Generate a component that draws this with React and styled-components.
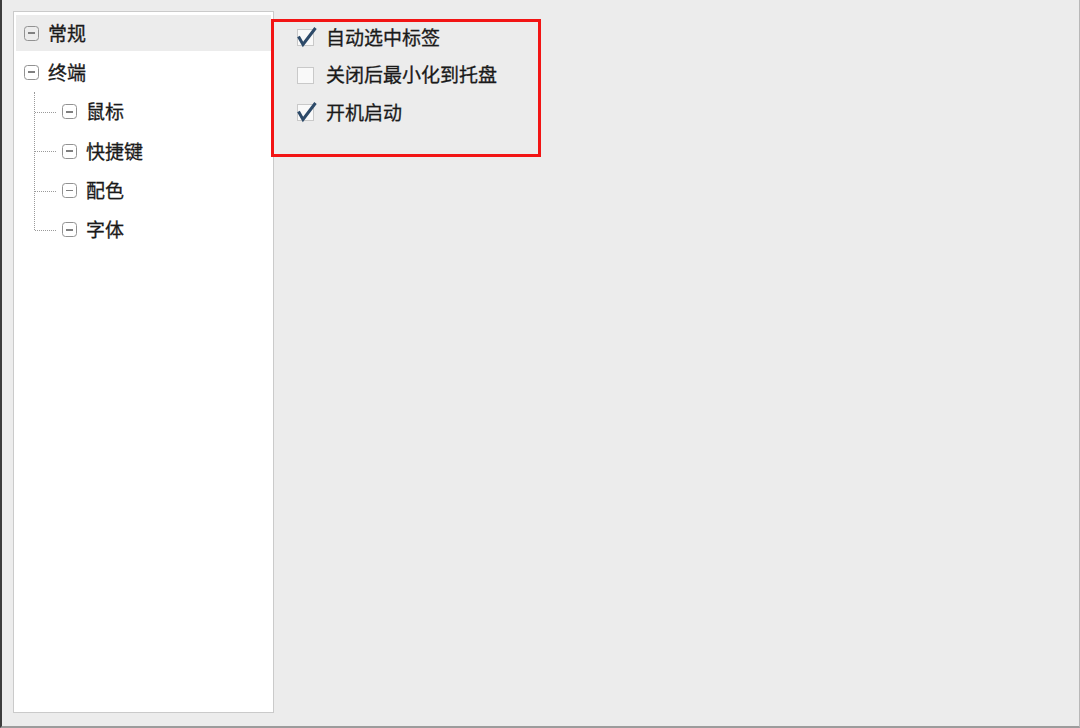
import styled, { createGlobalStyle } from 'styled-components';

const GlobalStyle = createGlobalStyle`
  html, body {
    margin: 0;
    padding: 0;
    background: #ececec;
  }
  body {
    font-family: "Noto Sans CJK SC", "Noto Sans", sans-serif;
    color: #1a1a1a;
  }
`;

const Window = styled.div`
  box-sizing: border-box;
  width: 1080px;
  height: 728px;
  background: #ececec;
  border-left: 2px solid #3d3d3d;
  border-right: 1px solid #b8b8b8;
  border-bottom: 2px solid #9c9c9c;
  display: flex;
  align-items: flex-start;
  padding: 11px 0 0 11px;
`;

const Tree = styled.div`
  box-sizing: border-box;
  width: 261px;
  height: 702px;
  background: #fff;
  border: 1px solid #cacaca;
  padding: 3px 2px;
  display: flex;
  flex-direction: column;
  gap: 3.4px;
`;

const Branch = styled.div`
  position: relative;
  display: flex;
  flex-direction: column;
  gap: 3.4px;

  &::before {
    content: '';
    position: absolute;
    left: 18px;
    top: -2px;
    bottom: 18px;
    border-left: 1px dotted #9a9a9a;
  }
`;

const Node = styled.div`
  position: relative;
  height: 36px;
  display: flex;
  align-items: center;
  padding-left: ${(p) => (p.$child ? 46 : 8)}px;
  background: ${(p) => (p.$selected ? '#ececec' : 'transparent')};
  font-size: 19px;
  line-height: 1;
  -webkit-text-stroke: 0.3px #1a1a1a;

  ${(p) =>
    p.$child &&
    `
    &::before {
      content: '';
      position: absolute;
      left: 19px;
      width: 21px;
      top: 18px;
      border-top: 1px dotted #9a9a9a;
    }
  `}
`;

const NodeText = styled.span`
  margin-left: 9px;
  padding-bottom: 2px;
`;

const Toggle = styled.span`
  box-sizing: border-box;
  width: 15px;
  height: 15px;
  border: 1.6px solid #929292;
  border-radius: 3.5px;
  display: flex;
  align-items: center;
  justify-content: center;
  flex-shrink: 0;

  &::after {
    content: '';
    width: 7px;
    height: 1.8px;
    background: #808080;
  }
`;

const Options = styled.div`
  box-sizing: border-box;
  width: 270px;
  height: 138px;
  margin: 8px 0 0 -3px;
  border: 3px solid #f21414;
  padding: 0 0 0 23px;
  display: flex;
  flex-direction: column;
  gap: 5.5px;
`;

const OptionRow = styled.label`
  height: 32px;
  display: flex;
  align-items: center;
  gap: 12px;
  font-size: 19px;
  line-height: 1;
  white-space: nowrap;
  -webkit-text-stroke: 0.3px #1a1a1a;
`;

const OptionText = styled.span`
  padding-bottom: 4px;
`;

const Box = styled.span`
  position: relative;
  box-sizing: border-box;
  width: 17px;
  height: 17px;
  border: 1px solid #c9c9c9;
  background: #f9f9f9;
  flex-shrink: 0;
  margin-bottom: 1px;

  svg {
    position: absolute;
    left: -2px;
    top: -6px;
    overflow: visible;
  }
`;

const Check = ({ checked }) => (
  <Box>
    {checked && (
      <svg width="22" height="22" viewBox="0 0 22 22">
        <path
          d="M2.5 12.5 L7 20.5 L19.5 4"
          fill="none"
          stroke="#2d4a69"
          strokeWidth="3"
          strokeLinejoin="miter"
        />
      </svg>
    )}
  </Box>
);

const children = ['鼠标', '快捷键', '配色', '字体'];

const options = [
  { label: '自动选中标签', checked: true },
  { label: '关闭后最小化到托盘', checked: false },
  { label: '开机启动', checked: true },
];

export default function App() {
  return (
    <>
      <GlobalStyle />
      <Window>
        <Tree>
          <Node $selected>
            <Toggle />
            <NodeText>常规</NodeText>
          </Node>
          <Node>
            <Toggle />
            <NodeText>终端</NodeText>
          </Node>
          <Branch>
            {children.map((c) => (
              <Node key={c} $child>
                <Toggle />
                <NodeText>{c}</NodeText>
              </Node>
            ))}
          </Branch>
        </Tree>
        <Options>
          {options.map((o) => (
            <OptionRow key={o.label}>
              <Check checked={o.checked} />
              <OptionText>{o.label}</OptionText>
            </OptionRow>
          ))}
        </Options>
      </Window>
    </>
  );
}
